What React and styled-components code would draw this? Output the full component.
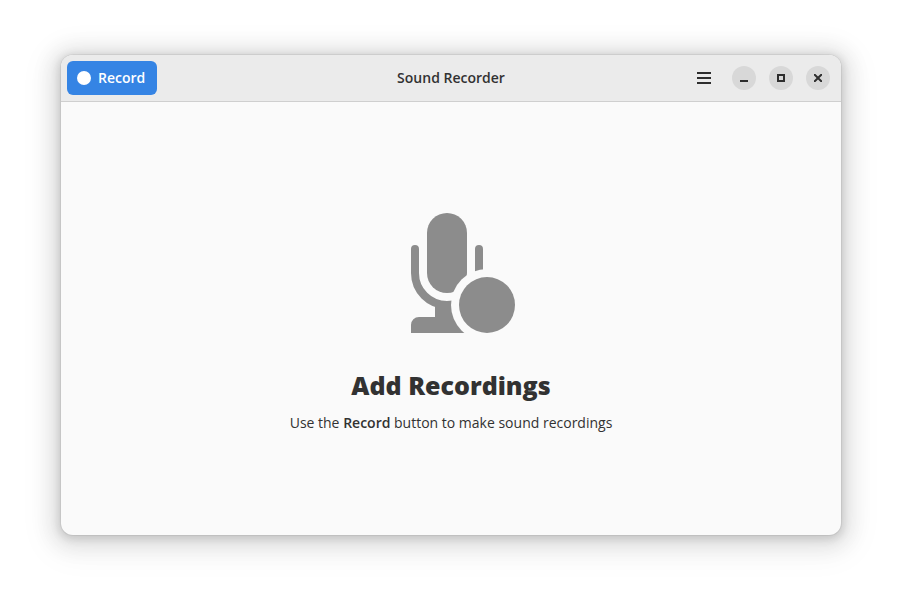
import React from "react";
import styled, { createGlobalStyle } from "styled-components";

const GlobalStyle = createGlobalStyle`
  * { box-sizing: border-box; }
  body { margin: 0; background: #fff; }
`;

const Desktop = styled.div`
  display: flex;
  min-height: 100vh;
  padding: 55px 61px 67px;
  font-family: "Open Sans", "Noto Sans", sans-serif;
  font-size: 14px;
  line-height: 20px;
  color: #323232;
`;

const Window = styled.section`
  flex: 1;
  display: flex;
  flex-direction: column;
  border-radius: 12px;
  background: #fafafa;
  overflow: hidden;
  box-shadow:
    0 0 0 1px rgba(0, 0, 0, 0.05),
    0 2px 8px 2px rgba(0, 0, 0, 0.13),
    0 3px 20px 10px rgba(0, 0, 0, 0.09),
    0 6px 32px 16px rgba(0, 0, 0, 0.04);
`;

const HeaderBar = styled.header`
  display: grid;
  grid-template-columns: 1fr auto 1fr;
  align-items: center;
  padding: 6px;
  background: #ebebeb;
  border-bottom: 1px solid #cfcfcf;
`;

const Title = styled.h1`
  margin: 0;
  font-size: 14px;
  font-weight: 600;
`;

const RecordButton = styled.button`
  justify-self: start;
  display: flex;
  align-items: center;
  gap: 7px;
  height: 34px;
  padding: 0 12px 0 10px;
  border: 0;
  border-radius: 6px;
  background: #3584e4;
  color: #fff;
  font: inherit;
  font-weight: 600;
`;

const RecordDot = styled.span`
  width: 14px;
  height: 14px;
  border-radius: 50%;
  background: #fff;
`;

const Controls = styled.div`
  justify-self: end;
  display: flex;
  align-items: center;
  gap: 11px;
  padding-right: 5px;
`;

const WindowControls = styled.div`
  display: flex;
  gap: 13px;
`;

const IconButton = styled.button`
  display: grid;
  place-items: center;
  width: ${(p) => (p.$round ? 24 : 34)}px;
  height: ${(p) => (p.$round ? 24 : 34)}px;
  padding: 0;
  border: 0;
  border-radius: ${(p) => (p.$round ? "50%" : "6px")};
  background: ${(p) => (p.$round ? "#d8d8d8" : "transparent")};
  color: #2e2e2e;
`;

const Glyph = styled.svg`
  display: block;
  width: 16px;
  height: 16px;
  fill: currentColor;
`;

const StatusPage = styled.main`
  flex: 1;
  display: flex;
  flex-direction: column;
  align-items: center;
  justify-content: center;
  padding: 24px;
  text-align: center;
`;

const StatusIcon = styled.svg`
  width: 128px;
  height: 128px;
  margin-bottom: 36px;
  color: #8c8c8c;
`;

const Heading = styled.h2`
  margin: 0 0 12px;
  font-size: 25px;
  line-height: 32px;
  font-weight: 800;
`;

const Description = styled.p`
  margin: 0;
`;

const Strong = styled.b`
  font-weight: 600;
`;

const windowButtons = [
  { label: "Minimize", path: "M4 10h8v2H4z" },
  { label: "Maximize", path: "M4 4v8h8V4zm2 2h4v4H6z" },
  {
    label: "Close",
    path: "M4 4h1.4L8 6.6 10.6 4H12v1.4L9.4 8l2.6 2.6V12h-1.4L8 9.4 5.4 12H4v-1.4L6.6 8 4 5.4z",
  },
];

function MicrophoneIcon() {
  return (
    <StatusIcon viewBox="0 0 16 16" aria-hidden="true">
      <mask id="badge-cutout" maskUnits="userSpaceOnUse" x="0" y="0" width="16" height="16">
        <rect width="16" height="16" fill="#fff" />
        <circle cx="12.5" cy="12.5" r="4.5" fill="#000" />
      </mask>
      <g mask="url(#badge-cutout)" fill="currentColor">
        <rect x="5" y="1" width="5" height="10" rx="2.5" />
        <path
          d="M3.5 5.5v3a4 4 0 0 0 8 0v-3"
          fill="none"
          stroke="currentColor"
          strokeLinecap="round"
        />
        <path d="M6 12.5h3V14h3v2H3v-1a1 1 0 0 1 1-1h2z" />
      </g>
      <circle cx="12.5" cy="12.5" r="3.5" fill="currentColor" />
    </StatusIcon>
  );
}

export default function App() {
  return (
    <>
      <GlobalStyle />
      <Desktop>
        <Window>
          <HeaderBar>
            <RecordButton type="button">
              <RecordDot />
              Record
            </RecordButton>
            <Title>Sound Recorder</Title>
            <Controls>
              <IconButton type="button" aria-label="Main menu">
                <Glyph viewBox="0 0 16 16" aria-hidden="true">
                  <path d="M1 2h14v2H1zM1 7h14v2H1zM1 12h14v2H1z" />
                </Glyph>
              </IconButton>
              <WindowControls>
                {windowButtons.map(({ label, path }) => (
                  <IconButton key={label} type="button" $round aria-label={label}>
                    <Glyph viewBox="0 0 16 16" aria-hidden="true">
                      <path d={path} />
                    </Glyph>
                  </IconButton>
                ))}
              </WindowControls>
            </Controls>
          </HeaderBar>
          <StatusPage>
            <MicrophoneIcon />
            <Heading>Add Recordings</Heading>
            <Description>
              Use the <Strong>Record</Strong> button to make sound recordings
            </Description>
          </StatusPage>
        </Window>
      </Desktop>
    </>
  );
}
